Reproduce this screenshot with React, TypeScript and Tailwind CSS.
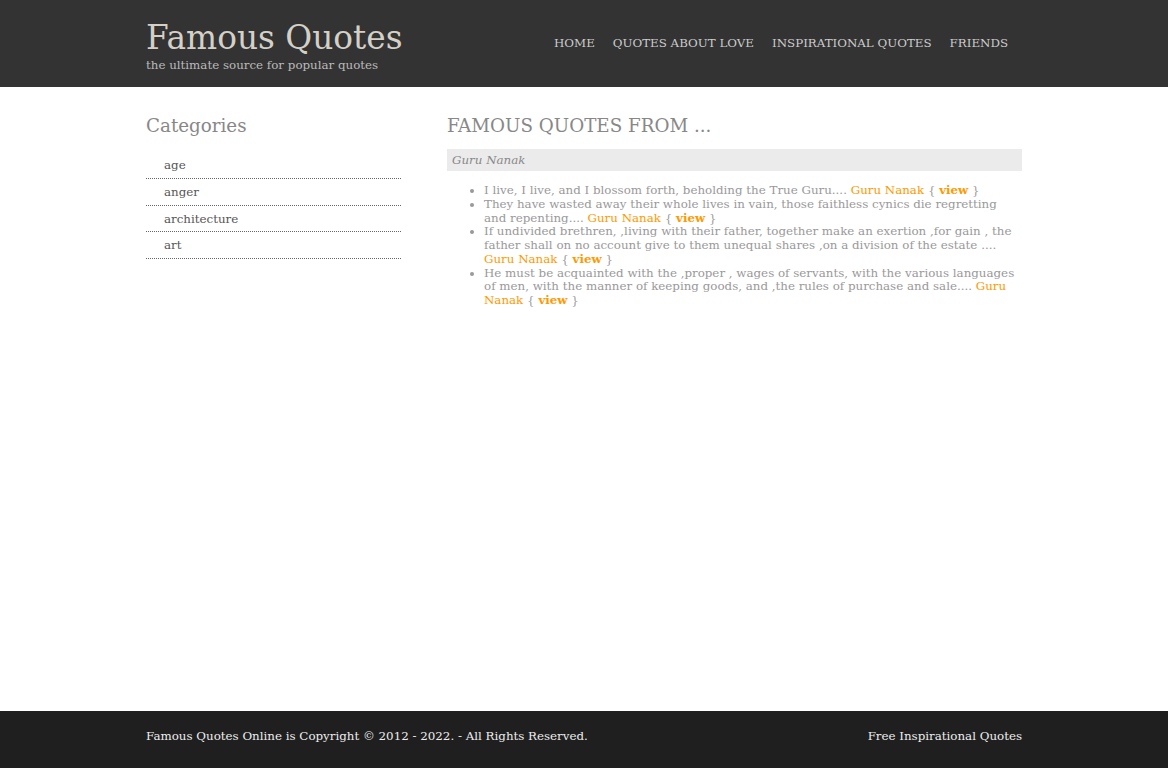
import React from "react";

const quotes = [
  "I live, I live, and I blossom forth, beholding the True Guru....",
  "They have wasted away their whole lives in vain, those faithless cynics die regretting and repenting....",
  "If undivided brethren, ,living with their father, together make an exertion ,for gain , the father shall on no account give to them unequal shares ,on a division of the estate ....",
  "He must be acquainted with the ,proper , wages of servants, with the various languages of men, with the manner of keeping goods, and ,the rules of purchase and sale....",
];

export default function App() {
  return (
    <div className="min-h-[768px] flex flex-col bg-white text-[11.85px]" style={{ fontFamily: '"DejaVu Serif", serif' }}>
      <header className="bg-[#333333] h-[87px]">
        <div className="w-[876px] mx-auto flex justify-between">
          <div className="pt-[18px]">
            <h1 className="text-[32.8px] leading-[40px] text-[#d4d0c8]">Famous Quotes</h1>
            <p className="text-[11.85px] leading-[14px] text-[#bbbbbb]">the ultimate source for popular quotes</p>
          </div>
          <nav className="flex gap-[18px] pt-[36px] pr-[14px] text-[11.85px] leading-[14px] text-[#cccccc]">
            <a>HOME</a>
            <a>QUOTES ABOUT LOVE</a>
            <a>INSPIRATIONAL QUOTES</a>
            <a>FRIENDS</a>
          </nav>
        </div>
      </header>
      <main className="flex-1 w-[876px] mx-auto flex gap-[46px] pt-[27px]">
        <aside className="w-[255px]">
          <h2 className="text-[18.3px] leading-[24px] text-[#888888]">Categories</h2>
          <ul className="mt-[14.3px] text-[11.85px] leading-[14px] text-[#555555]">
            {["age", "anger", "architecture", "art"].map((c) => (
              <li key={c} className="pl-[18px] h-[26.67px] pt-[6px] border-b border-dotted border-[#666666]">{c}</li>
            ))}
          </ul>
        </aside>
        <section className="flex-1">
          <h2 className="text-[18.3px] leading-[24px] text-[#888888] uppercase">Famous Quotes from ...</h2>
          <div className="mt-[11px] bg-[#ebebeb] h-[22px] px-[5px] text-[11.85px] italic text-[#888888] leading-[22px]">Guru Nanak</div>
          <ul className="mt-[13px] pl-[37px] list-disc text-[11.85px] leading-[13.75px] text-[#999999] marker:text-[#999999]">
            {quotes.map((q, i) => (
              <li key={i}>
                {q} <a className="text-[#ff9900]">Guru Nanak</a> {"{"} <a className="text-[#ff9900] font-bold">view</a> {"}"}
              </li>
            ))}
          </ul>
        </section>
      </main>
      <footer className="bg-[#1f1f1f] h-[57px]">
        <div className="w-[876px] mx-auto flex justify-between pt-[18px] text-[11.85px] leading-[14px] text-[#eeeeee]">
          <span>Famous Quotes Online is Copyright © 2012 - 2022. - All Rights Reserved.</span>
          <span>Free Inspirational Quotes</span>
        </div>
      </footer>
    </div>
  );
}
